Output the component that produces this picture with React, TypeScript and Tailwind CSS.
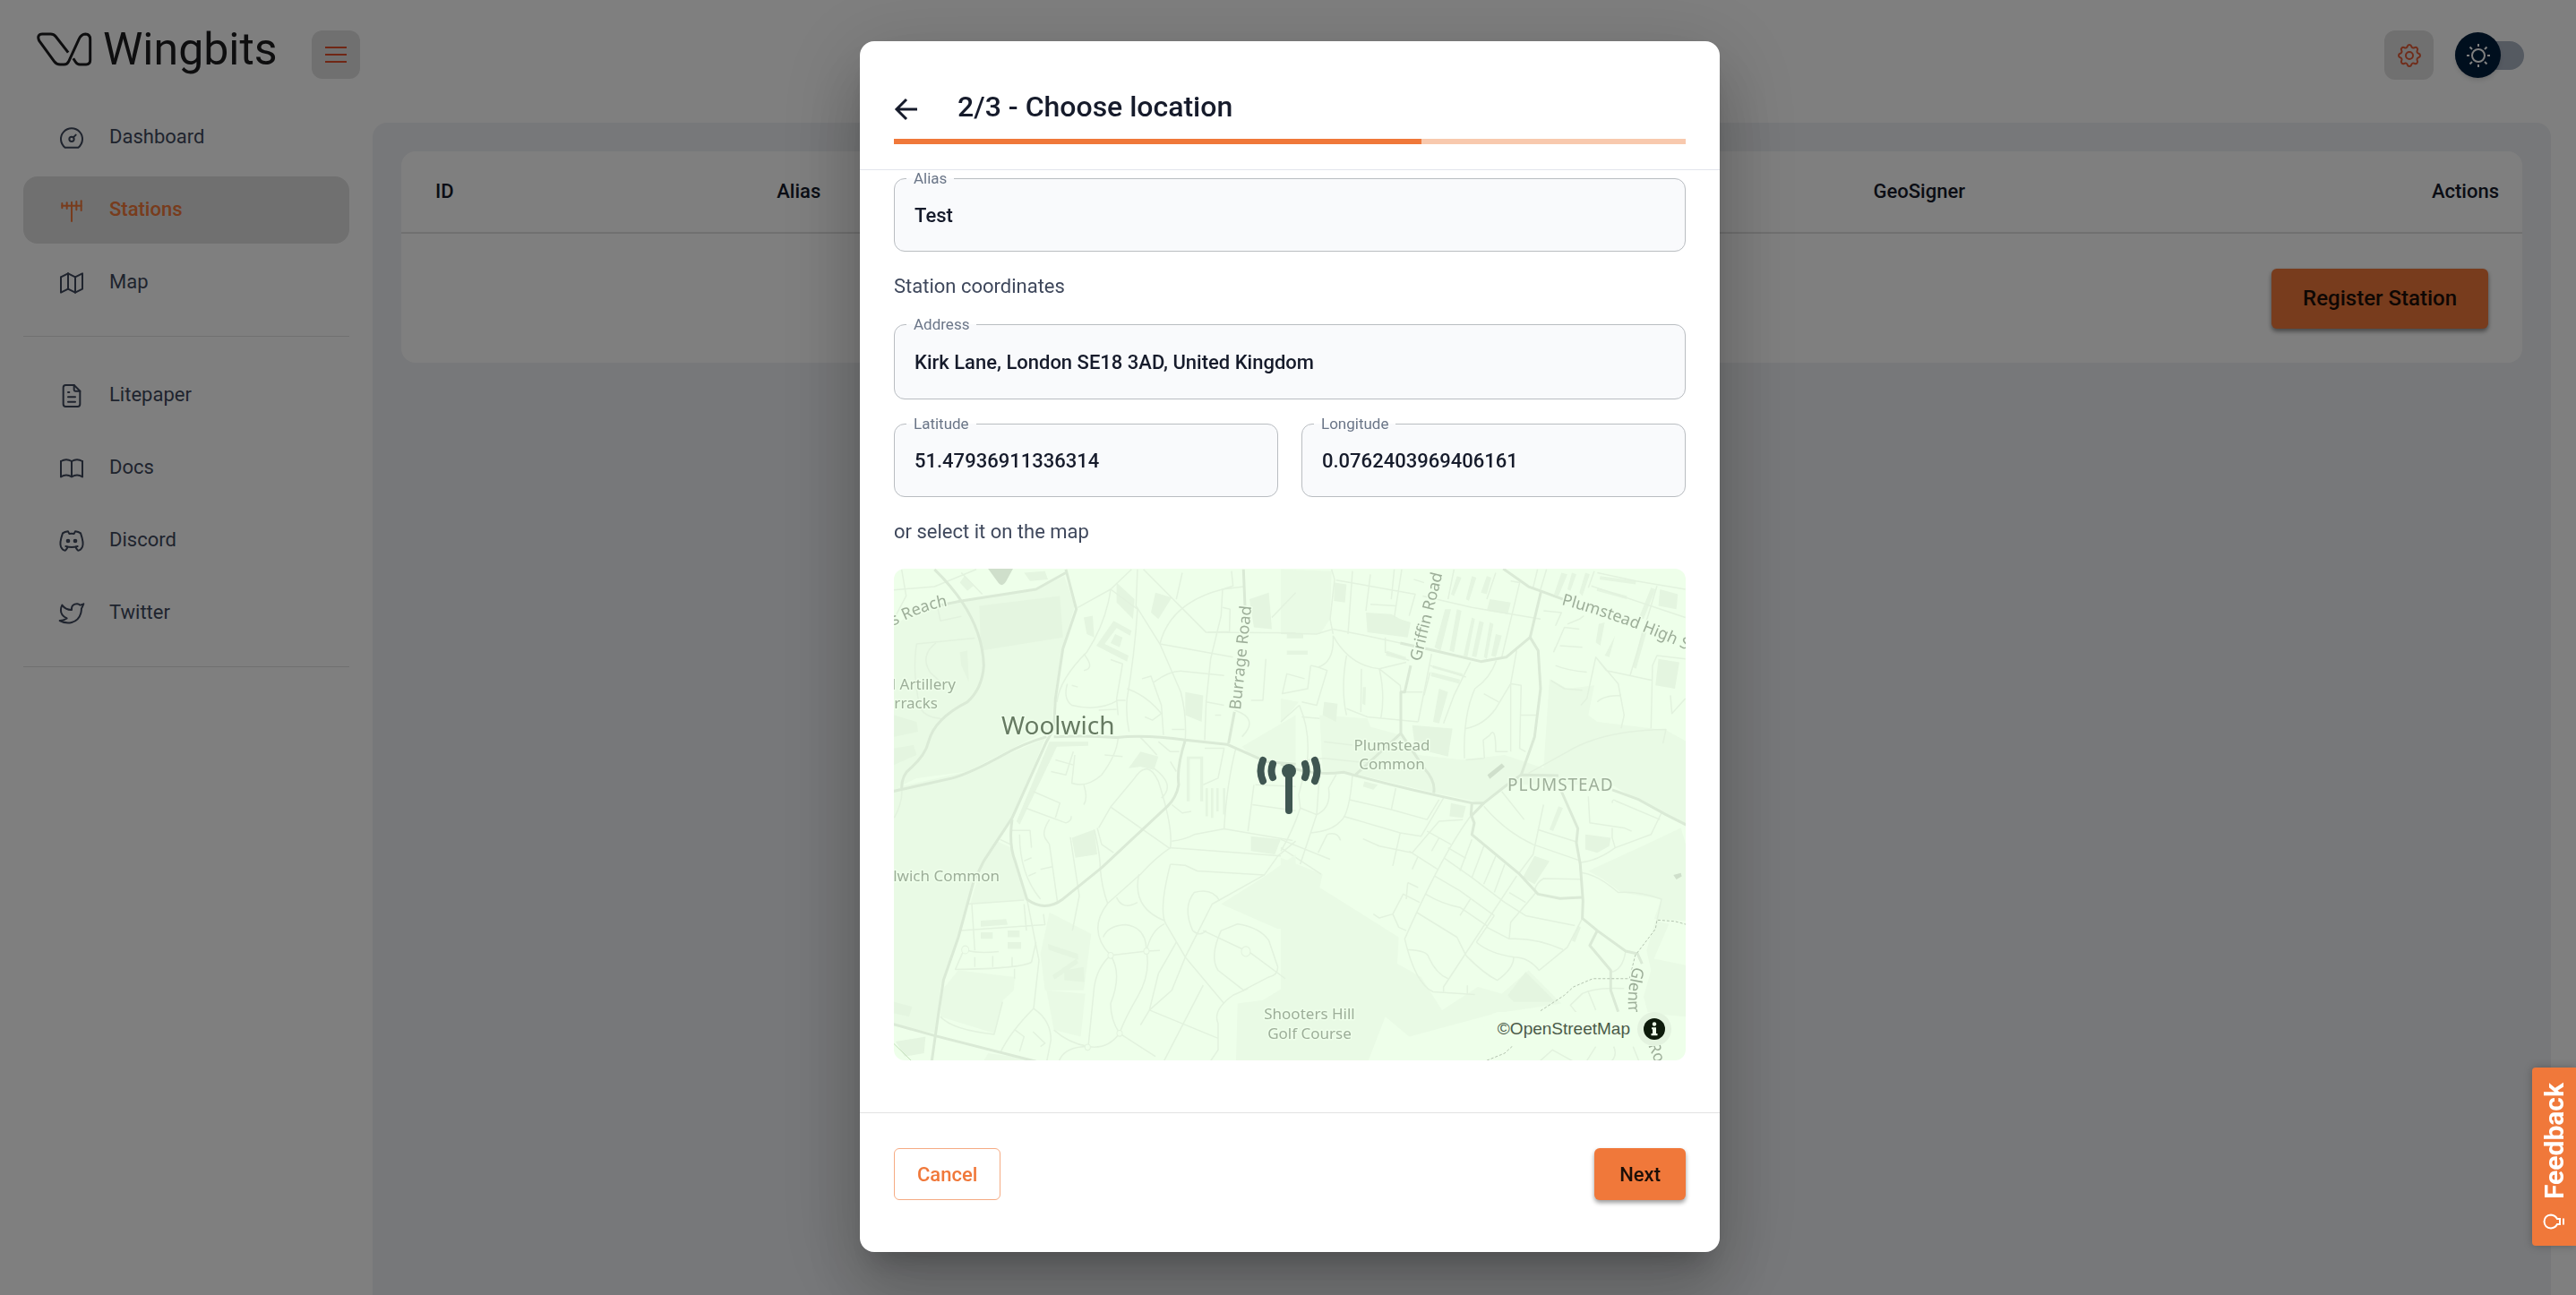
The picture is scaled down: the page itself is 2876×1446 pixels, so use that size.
import React from 'react';
import {
  TbAntenna,
  TbBook,
  TbBrandDiscord,
  TbBrandTwitter,
  TbDashboard,
  TbFileText,
  TbMap,
  TbSettings,
} from 'react-icons/tb';

type NavItem = { label: string; icon: React.ElementType; active?: boolean };

const mainNav: NavItem[] = [
  { label: 'Dashboard', icon: TbDashboard },
  { label: 'Stations', icon: TbAntenna, active: true },
  { label: 'Map', icon: TbMap },
];

const resourceNav: NavItem[] = [
  { label: 'Litepaper', icon: TbFileText },
  { label: 'Docs', icon: TbBook },
  { label: 'Discord', icon: TbBrandDiscord },
  { label: 'Twitter', icon: TbBrandTwitter },
];

function NavList({ items }: { items: NavItem[] }) {
  return (
    <ul className="flex flex-col gap-1.5">
      {items.map(({ label, icon: Icon, active }) => (
        <li key={label}>
          <a
            href="#"
            className={
              active
                ? 'flex h-[75px] items-center gap-[26px] rounded-2xl bg-[#e0e0e0] pl-[38px] text-[22px] font-medium text-[#f0783a]'
                : 'flex h-[75px] items-center gap-[26px] rounded-2xl pl-[38px] text-[22px] text-[#3f485c]'
            }
          >
            <Icon className="size-8 shrink-0 [stroke-width:1.5]" />
            <span className="pb-0.5">{label}</span>
          </a>
        </li>
      ))}
    </ul>
  );
}

function Logo() {
  return (
    <a href="#" className="flex items-center gap-3 text-[#1c1c1e]">
      <svg viewBox="60 42 190 120" className="h-10 w-[63px]" fill="none" stroke="currentColor" strokeWidth="9" strokeLinejoin="round">
        <path d="M169 113 L127 59 Q120 51 110 51 H82 Q62 52 71 73 L122 143 Q129 153 142 153 H155 Q166 153 171 142 L206 66 Q213 52 227 51 Q243 52 243 68 V139 Q243 153 229 153 H208 Q199 153 194 145 L186 133" />
      </svg>
      <span className="text-[50px] leading-[60px]">Wingbits</span>
    </a>
  );
}

function Header() {
  return (
    <header className="flex h-[137px] items-start justify-between pr-[58px] pl-10">
      <div className="flex">
        <div className="pt-[25px]">
          <Logo />
        </div>
        <button aria-label="Toggle menu" className="mt-[34px] ml-[38px] flex size-[54px] items-center justify-center rounded-xl bg-[#e0e0e0] text-[#e04e2a]">
          <svg viewBox="0 0 24 18" className="h-[18px] w-6" stroke="currentColor" strokeWidth="2">
            <path d="M0 1H24M0 9H24M0 17H24" />
          </svg>
        </button>
      </div>
      <div className="flex items-center gap-6 pt-[34px]">
        <button aria-label="Settings" className="flex size-[55px] items-center justify-center rounded-xl bg-[#e0e0e0] text-[#e05a36]">
          <TbSettings className="size-8 [stroke-width:1.5]" />
        </button>
        <button role="switch" aria-checked="false" aria-label="Dark mode" className="flex h-8 w-[77px] items-center rounded-full bg-[#aab4c3]">
          <span className="flex size-[51px] shrink-0 items-center justify-center rounded-full bg-[#001e3c] shadow-md">
            <svg viewBox="0 0 28 28" className="size-7" fill="none" stroke="#ffffff" strokeWidth="2">
              <circle cx="14" cy="14" r="7" />
              <path d="M14 1V4M14 24V27M1 14H4M24 14H27M4.5 4.5L7 7M21 21L23.500 23.500M4.500 23.500L7 21M21 7L23.500 4.500" />
            </svg>
          </span>
        </button>
      </div>
    </header>
  );
}

function StationsTable() {
  return (
    <div className="overflow-hidden rounded-2xl bg-white">
      <table className="w-full table-fixed text-left text-[22px] text-[#161b2b]">
        <thead>
          <tr className="h-[91px] border-b-2 border-[#e0e0e0]">
            <th className="w-[16.1%] pb-0.5 pl-[38px] font-medium">ID</th>
            <th className="w-[51.7%] pb-0.5 pl-[38px] font-medium">Alias</th>
            <th className="pb-0.5 pl-[38px] font-medium">GeoSigner</th>
            <th className="pr-[26px] pb-0.5 text-right font-medium">Actions</th>
          </tr>
        </thead>
        <tbody>
          <tr className="h-[145px]">
            <td colSpan={4} className="pr-[38px] text-right">
              <button className="h-[67px] rounded-md bg-[#f0783a] px-[35px] text-2xl font-medium text-[#1c0f08] shadow-[0_3px_5px_rgba(0,0,0,0.45)]">
                Register Station
              </button>
            </td>
          </tr>
        </tbody>
      </table>
    </div>
  );
}

function Field({ id, label, value, tall }: { id: string; label: string; value: string; tall?: boolean }) {
  return (
    <fieldset className="w-full min-w-0 rounded-xl border border-[#b9bdc1] bg-[#f9fafc] pb-2">
      <legend className="ml-[13px] px-2 text-[17px] leading-[18px] text-[#6b7688]">
        <label htmlFor={id}>{label}</label>
      </legend>
      <input
        id={id}
        defaultValue={value}
        className={
          tall
            ? 'h-[66px] w-full bg-transparent px-[22px] text-[22px] font-medium text-[#161b2b] outline-none'
            : 'h-16 w-full bg-transparent px-[22px] text-[22px] font-medium text-[#161b2b] outline-none'
        }
      />
    </fieldset>
  );
}

const westParks = [
  'M0 240 L120 170 L330 130 L520 105 L625 60 L660 150 L625 260 L595 400 L580 520 L300 650 L130 670 L60 700 L0 700Z',
  'M0 710 L300 650 L560 550 L520 640 L450 790 L350 920 L300 1050 L270 1150 L210 1300 L195 1440 L0 1410Z',
  'M400 860 L445 880 L500 1036 L310 1050 L345 940Z',
  'M270 1250 L460 1270 L455 1310 L420 1340 L390 1440 L210 1390 L215 1310Z',
  'M575 1075 L715 1140 L690 1310 L560 1310 L545 1200Z',
  'M565 1310 L695 1320 L680 1450 L590 1430Z',
  'M1150 1050 L1290 970 L1400 900 L1400 1120 L1340 1125Z',
  'M1400 1280 L1290 1340 L1205 1350 L1200 1530 L1400 1530Z',
  'M1220 575 L1400 480 L1400 620 L1260 610Z',
  'M370 1500 L530 1520 L350 1530Z',
];

const westBlocks = [
  'M340 150 L610 120 L620 245 L345 285Z',
  'M275 290 L300 285 L305 380 L280 330Z',
  'M650 850 L725 825 L735 900 L662 910Z',
  'M840 640 L880 590 L940 605 L925 645 L880 635Z',
  'M1245 130 L1310 110 L1320 220 L1260 215Z',
  'M1030 410 L1090 420 L1085 500 L1030 480Z',
  'M1250 845 L1350 855 L1330 900 L1250 890Z',
  'M1035 605 H1045 V740 H1035Z M1080 605 H1090 V740 H1080Z M1045 605 H1080 V612 H1045Z',
  'M1098 700 H1106 V785 H1098Z M1116 700 H1124 V790 H1116Z M1134 700 H1142 V770 H1134Z M1156 700 H1164 V780 H1156Z',
  'M55 580 L120 570 L130 600 L55 630Z',
  'M55 480 L130 500 L135 530 L55 545Z',
  'M55 1345 L115 1360 L105 1390 L55 1380Z',
  'M575 560 L705 560 L705 572 L600 575 L475 810 L465 800Z',
  'M345 1100 L430 1095 L435 1112 L345 1118Z',
  'M345 1135 H385 V1155 H345Z M435 1130 H475 V1150 H435Z M435 1165 H480 V1185 H435Z',
  'M570 1170 L670 1200 L672 1218 L572 1188Z M585 1265 L665 1215 L672 1228 L592 1278Z M625 1250 L690 1240 L692 1285 L625 1280Z',
  'M790 195 L850 225 L845 240 L800 217 L760 265 L840 300 L835 318 L732 270Z M795 235 L820 245 L810 275 L780 262Z',
  'M690 185 L720 180 L725 245 L700 235Z',
  'M930 110 L985 125 L940 190 L915 170Z',
  'M800 80 L860 130 L855 190 L800 140Z',
  'M60 1465 L160 1450 L155 1500 L90 1510Z',
  'M290 60 L320 90 L300 105 L275 80Z',
  'M490 50 L560 45 L570 70 L510 75Z',
];

const westMajor = [
  'M630 40 L665 160 L620 280 L595 430 L590 520 L565 560 L490 710 L450 790 L355 920 L320 985 L270 1150 L220 1280 L205 1370 L180 1530',
  'M565 545 Q490 565 420 600 Q310 655 250 670 Q150 690 50 710',
  'M590 545 Q700 540 800 547 Q900 538 1030 555 L1170 568 L1300 620 L1400 628',
  'M50 1412 L190 1447 L530 1525',
  'M1030 555 Q1000 640 1008 690 Q1000 730 970 755 L750 940 L620 1035 Q560 1075 500 1036 L460 920 Q438 870 450 795',
  'M630 50 L530 100 L280 135 L200 150',
  'M190 40 Q350 180 355 330 Q350 400 300 440 Q190 490 170 560 Q160 600 110 640 Q80 660 80 700',
  'M1225 40 L1230 150 M1195 470 L1175 565',
];

const westMinor = [
  'M50 102 L190 92 L330 40',
  'M80 40 L95 120 L60 180',
  'M280 50 L350 115 M200 155 L210 195 L280 182',
  'M325 247 L130 265 Q115 350 140 450 Q150 485 210 490 M195 262 Q140 300 175 350 L210 380',
  'M80 700 Q85 740 55 790',
  'M670 155 L780 100 L850 40 M780 100 Q765 200 700 290 Q610 370 600 440',
  'M780 100 L870 160 Q860 300 835 430 Q830 480 842 530',
  'M870 40 L865 150 L945 265 L1015 410 Q1035 480 1030 555',
  'M945 265 Q980 140 1155 100 L1225 92 M945 265 L1190 305',
  'M1020 50 L1000 130 M890 40 L1100 230 L1400 232',
  'M1185 45 L1190 90 L1155 100 L1150 180 L1115 310 L1100 440 L1095 555',
  'M1155 155 L1180 160 L1178 228 L1105 230 M1100 440 L1160 450 M1130 480 H1150',
  'M1300 310 L1290 435 L1250 435 M1400 110 L1320 185 M1195 465 Q1280 490 1220 545',
  'M925 380 Q980 345 1020 347 L1160 360 M835 400 Q900 420 950 475 L920 495 L895 485',
  'M885 370 L915 362 L950 450 L957 540 M985 523 H1028',
  'M635 385 Q620 430 650 450 Q740 470 805 435 L830 435 M780 312 L820 325 L800 430 L805 480',
  'M690 295 Q730 340 690 345 M740 465 L800 462 M650 390 L670 395',
  'M805 550 Q800 600 750 660 Q700 700 650 685 L660 600 M580 650 L630 660 L655 590 M760 600 L820 605',
  'M655 630 L595 615 M690 690 Q705 730 690 750 M520 710 L610 745 L595 790 M495 760 L630 805 Q650 800 648 785',
  'M575 795 Q550 830 560 850 L575 870 L602 1045 M450 828 H510 L515 880 M475 840 Q475 960 545 1035 M490 920 L515 910 M505 965 L530 955 M545 945 L585 937',
  'M780 757 L975 880 L1060 885 L1350 905 M740 820 L780 757 L860 670 Q905 610 940 680 Q990 820 980 880',
  'M725 825 Q745 900 745 940 Q750 1000 770 1048 M645 848 L675 1025 L652 1130 M735 820 L750 870 L790 895',
  'M940 560 L980 590 H1010 M880 547 L905 570 L935 600',
  'M985 860 Q1030 855 1060 840 L1160 823 L1390 858 M980 930 L1030 933 L1070 950 L1295 962',
  'M1200 578 Q1170 680 1160 823 M1260 690 L1240 830 M1265 690 L1400 695 M1255 750 L1400 768 M1095 580 L1160 580 L1140 670 L1090 690',
  'M985 750 L1020 775 L1050 770 M980 880 Q930 910 880 960 L770 1048 Q700 1130 780 1205 L900 1192 Q900 1120 830 1112 Q770 1115 755 1150',
  'M980 930 Q940 1070 965 1110 L1030 1210 L1160 1350 M875 960 Q850 1060 960 1100 M800 1030 Q820 1070 870 1045',
  'M960 1110 Q915 1130 900 1192 L945 1190 M900 1192 Q915 1260 870 1330 Q825 1400 810 1440 Q780 1400 780 1350 Q820 1260 780 1205',
  'M780 1205 Q735 1240 725 1300 L705 1480 Q770 1490 810 1440 L930 1510 M705 1480 Q620 1480 605 1530 M705 1480 Q640 1470 590 1430',
  'M1000 1165 L940 1260 L910 1370 L1140 1455 M1030 1210 L985 1310 L910 1370 L880 1415',
  'M1145 1040 Q1120 1000 1060 1015 Q1020 1060 1055 1130 Q1080 1150 1100 1130',
  'M1400 860 L1340 905 L1295 962 L1120 1050 L1030 1210 M1090 1130 L1220 1185 M1245 1195 L1365 1275',
  'M1205 1110 Q1280 1120 1310 1160 L1340 1240 Q1340 1265 1310 1270 L1225 1310 L1140 1250 Q1110 1210 1150 1130Z',
  'M1090 1295 L955 1530 M1240 1305 L1190 1325 Q1120 1370 1140 1410 L1140 1490 L1110 1530',
  'M500 1036 L540 1220 L522 1365 Q580 1400 580 1460 L565 1530 M522 1365 Q440 1440 410 1500',
  'M300 1050 L490 1038 M278 1130 L560 1112 L555 1080 M315 1050 L325 1190 M490 1050 L498 1130',
  'M530 1165 L515 1225 Q480 1245 260 1247 L285 1195 M300 1190 Q340 1200 405 1193 M325 1210 V1240 M385 1207 V1240 M450 1210 V1240 M458 1245 V1275',
  'M210 1390 Q250 1430 390 1443 L418 1345 M410 855 L445 870',
  'M460 1430 L490 1450 L475 1495 M520 1435 L560 1470 L545 1480 M980 620 L1000 650 M925 640 Q1000 690 950 730',
];

const eastParks = [
  'M0 40 L170 45 L165 190 L130 235 L0 235Z',
  'M0 430 L60 440 L0 505Z',
  'M130 480 L290 490 L300 515 L400 540 L460 600 L610 615 L750 600 L880 640 L900 370 L960 400 L1050 390 L1030 480 L1060 500 L1290 525 L1360 560 L1360 810 L1200 740 L1110 690 L760 690 L680 745 L520 715 L400 690 L240 655 L140 650Z',
  'M0 910 L140 960 L130 1000 L395 1150 L390 1230 L470 1270 L540 1370 L660 1300 L740 1320 L830 1250 L940 1350 L720 1380 L430 1450 L350 1390 L290 1530 L0 1530Z',
  'M1030 950 L1200 880 L1340 820 L1360 880 L1360 1100 L1250 1095 L1275 1035 L1140 1015 L1080 975Z',
  'M1255 1100 L1300 1110 L1250 1215 L1360 1235 L1360 1390 L1230 1380 L1215 1330 L1240 1250 L1225 1190Z',
];

const eastBlocks = [
  'M285 170 L370 175 L400 190 L435 200 L425 245 L290 230Z',
  'M440 510 L575 520 L560 605 L450 580Z',
  'M180 80 L220 85 L215 140 L178 135Z',
  'M1265 310 L1335 320 L1320 400 L1255 390Z',
  'M1020 840 L1105 850 L1100 875 L1060 895 L1020 885Z',
  'M850 905 L900 920 L850 990 L810 970Z',
  'M570 745 L620 755 L610 790 L565 785Z',
  'M145 440 L190 445 L185 500 L140 480Z',
  'M700 130 L770 140 L760 175 L690 165Z',
  'M820 1255 L920 1345 L780 1345 L760 1325Z',
  'M550 160 L570 160 L535 285 L515 275Z M590 160 L605 165 L580 290 L565 285Z M640 185 L650 190 L625 305 L612 300Z M665 195 L680 200 L655 305 L640 302Z M700 200 L712 205 L690 310 L680 305Z M720 235 L740 240 L720 305 L705 300Z',
  'M510 330 L610 355 L608 362 L508 338Z M505 350 L600 372 L598 385 L503 362Z M530 400 L560 410 L530 505 L510 500Z',
  'M590 60 L605 65 L580 120 L570 115Z M640 60 L655 65 L630 135 L620 130Z M690 60 L705 65 L690 115 L670 110Z',
  'M940 50 L960 55 L930 120 L915 115Z M975 50 L990 55 L970 105 L960 100Z M1020 50 L1035 55 L1010 120 L1000 110Z',
  'M1070 60 L1190 75 L1188 85 L1068 70Z M1060 95 L1160 120 L1158 130 L1058 105Z M1240 95 L1255 100 L1215 190 L1200 185Z M1270 100 L1330 115 L1325 160 L1265 150Z',
  'M1085 200 L1070 270 L1055 260 L1065 205Z M1225 230 L1190 340 L1180 335 L1210 225Z M1120 240 L1100 305 L1085 300Z',
  'M945 760 L912 830 L900 825 L930 755Z',
  'M275 395 L285 395 L283 450 L273 445Z M355 285 L420 305 L415 315 L352 300Z',
  'M280 680 L325 690 L310 705 L275 695Z',
  'M1005 1120 L985 1165 L975 1160 L995 1115Z',
  'M20 232 H75 V248 H20Z M20 285 H90 V297 H20Z',
];

const eastMajor = [
  'M745 38 L830 92 L870 105 L945 130',
  'M872 105 L835 245 L862 285 L870 400 L850 545 L805 660',
  'M835 245 L755 305 L670 318 L515 285 L400 262',
  'M435 330 L415 410 H402 V535 L250 660 M402 535 L480 640 Q520 680 512 715',
  'M0 628 Q100 665 210 652 Q400 700 640 745 L680 745 L755 692 L805 660 L930 662',
  'M640 745 L637 780 L648 805 L640 840 L800 960 L862 1020 L935 1033 L1008 1030',
  'M680 745 L637 785',
  'M935 700 L995 822 L990 865 L1003 930 L1012 1040 L1010 1093 L1060 1130 L1155 1192 L1195 1200 L1210 1230',
  'M1110 705 L1200 735 L1290 780 L1360 812',
  'M1060 1130 L1035 1175 L1105 1250 V1310 L1130 1375',
];

const eastMinor = [
  'M0 233 L120 235 L175 220 L285 240 L400 262 M170 40 L180 70 L165 190 L175 235',
  'M240 45 L225 235 M300 55 L285 165 M380 40 L370 130 M185 72 L450 115 L430 180 M405 40 L380 185',
  'M175 240 Q230 330 330 340 L420 320 M175 240 Q180 320 125 335 L100 330 M125 335 L155 345 L120 450 L70 440',
  'M220 300 Q200 400 220 480 M270 340 L268 470 M330 340 Q350 420 335 490 M220 460 L290 485 L460 500 M330 340 L400 390 L402 410 L475 410',
  'M505 295 L460 500 M635 320 L580 420 L545 505 M722 315 Q700 370 650 400 Q610 480 615 610 M790 285 L770 385 L720 460 Q680 510 620 520',
  'M770 385 L805 390 L800 580 L820 590 M770 385 V590 M805 480 H855 M680 415 L730 440 M700 540 Q720 510 720 590 H760 M700 540 L678 555 L682 610 M620 615 L680 610',
  'M475 120 L640 155 L870 190 M580 40 L560 130 M720 50 L690 130 M770 75 L800 80 L740 305 M860 40 L845 95 M890 40 L870 100',
  'M100 330 L90 400 L5 415 L20 355 L80 370 M62 450 Q100 530 88 620 L60 720 L65 760 Q40 830 0 890 M0 500 L62 450',
  'M88 615 L145 610 L300 625 M70 485 L130 490 M145 560 L240 570',
  'M0 855 L165 915 M0 880 L135 960 M65 760 L120 780 Q170 760 160 700 L185 660 M130 655 L120 780 L65 930 M240 660 Q230 780 200 800 Q170 830 100 835 M155 840 Q190 830 200 858 M155 840 L125 895',
  'M230 735 L370 765 L490 795 L530 735 M385 700 L370 765 M210 785 L400 835 L470 845 L545 730 M400 835 L375 935 M275 853 L330 875 L440 895 M440 895 L530 800 L610 795 M430 890 L525 945 M490 830 L570 870 M530 850 L505 890 M460 905 L440 945',
  'M635 785 Q540 900 415 1155 Q450 1290 510 1315 L650 1323 M545 910 L640 970 L750 1045 L820 1085 L985 1115 M515 965 L600 1010 L715 1085 M485 1020 Q540 1050 600 1060 L690 1115 M455 1075 L590 1150 L620 1205',
  'M560 880 L620 912 M640 855 L600 950 M680 875 L640 970 M720 905 L680 990 M750 930 L715 1015 M790 965 L545 1300 V1315 M635 1035 L600 1085 M765 1015 L820 1045 M715 1085 L655 1165 M655 1165 Q700 1200 780 1210 Q830 1210 865 1250 L960 1180 L1010 1093',
  'M690 1120 L765 1155 Q850 1150 945 1187 M855 1015 L770 1105 L765 1155 M780 1210 Q780 1245 725 1280 Q680 1260 620 1205 M425 1188 Q490 1190 495 1210 Q520 1260 560 1275 M625 1295 V1320',
  'M680 755 Q750 830 845 870 L1005 920 M860 825 L990 862 M880 750 L845 900 L795 960 M740 710 L815 795 M1005 975 L880 973 Q855 985 850 1010 M1000 925 Q1060 920 1120 880 L1240 840 L1275 775',
  'M1030 725 L1035 805 L1150 820 L1175 830 M1110 820 V850 L1120 880 M1110 745 Q1110 730 1125 740 L1270 795',
  'M1005 955 Q1060 960 1130 1015 Q1200 1010 1275 1035 L1260 1100 M1155 1192 Q1145 1250 1105 1255 M1150 1305 Q1060 1300 1010 1320 L970 1355 L1010 1400 M1030 1315 L1055 1370',
  'M830 655 Q900 620 960 590 Q1080 525 1290 523 L1280 565 M1240 520 L1245 330 L1260 300 L1355 310 M1245 375 L1090 345 L1055 305 L1025 430 L1005 450 M1055 305 L1130 385 L1150 480 L1140 520 M1060 440 Q1080 420 1140 420',
  'M905 375 L950 400 L1010 405 M920 330 Q960 345 1025 350 M960 205 L1000 190 L1015 180 M920 275 Q900 320 950 215 L1000 220 M935 270 L1010 275 M880 165 L940 170 L920 210',
  'M1050 45 L1030 95 M1040 90 L1355 185 M1060 50 L1190 75 L1355 100 M1260 90 L1170 360 M1305 420 L1310 475 L1355 430',
  'M300 145 L385 150 M445 70 L480 80 M350 245 L350 290 L430 315 M480 420 L500 350 M500 330 L620 365',
  'M310 1080 L330 1092 L375 1080 L410 1020 L465 1045 M375 1080 L395 1120 L420 1130 M425 985 L460 1000 M425 985 L420 1035',
  'M860 1530 L910 1490 L990 1530 M1055 1480 L1020 1530 M1115 1480 Q1130 1510 1100 1530 M1180 1480 L1200 1525',
];

function Paths({ list, className }: { list: string[]; className: string }) {
  return (
    <>
      {list.map((d) => (
        <path key={d} d={d} className={className} vectorEffect="non-scaling-stroke" />
      ))}
    </>
  );
}

function MapDrawing() {
  const park = 'fill-[#e9fae5]';
  const block = 'fill-[#e4f5e0]';
  const minor = 'fill-none stroke-[#e2f2de] stroke-[1.5px]';
  const major = 'fill-none stroke-[#daead6] stroke-[3px]';
  return (
    <svg viewBox="0 0 884 549" preserveAspectRatio="xMidYMid slice" className="block size-full bg-[#eeffea]" strokeLinejoin="round" role="img" aria-label="Map of Woolwich and Plumstead">
      <defs>
        <path id="reach" d="M-100 150 Q-20 56 62 41" />
        <path id="highStreet" d="M745 40 Q845 66 960 128" />
        <path id="glenmore" d="M826 444 Q812 490 830 530" />
      </defs>
      <g transform="translate(432 -14) scale(0.3333 0.37)">
        <Paths list={eastParks} className={park} />
        <Paths list={eastBlocks} className={block} />
        <Paths list={eastMinor} className={minor} />
        <Paths list={eastMajor} className={major} />
        <path d="M692 660 L740 626 L750 635 L700 672Z M1315 962 L1340 956 L1343 966 L1325 976Z" fill="#cfdfcb" />
        <path d="M870 1372 L950 1325 L980 1300 L1045 1275 H1168 L1187 1205 L1255 1125 L1260 1098 L1320 1102 L1360 1112 M690 1522 L750 1500 L780 1475" fill="none" stroke="#b4c4b0" strokeWidth="1" strokeDasharray="3 2" vectorEffect="non-scaling-stroke" />
      </g>
      <g transform="translate(-18 -14) scale(0.3333 0.37)">
        <Paths list={westParks} className={park} />
        <Paths list={westBlocks} className={block} />
        <Paths list={westMinor} className={minor} />
        <Paths list={westMajor} className={major} />
        <path d="M368 36 H454 L430 76 Q415 98 400 76Z" fill="#cfdfcb" />
        <g fill="#eeffea" className="stroke-[#e2f2de] stroke-[3px]">
          <circle cx="780" cy="1205" r="9" />
          <circle cx="900" cy="1192" r="9" />
          <circle cx="810" cy="1440" r="9" />
          <circle cx="703" cy="1482" r="9" />
          <circle cx="293" cy="1188" r="12" />
          <circle cx="1233" cy="1193" r="15" />
        </g>
        <path d="M50 1468 L115 1525" className="stroke-[#c3dfba] stroke-[1px]" vectorEffect="non-scaling-stroke" />
      </g>
      <g className="fill-[#9dae99] stroke-[#eeffea] stroke-[3px] font-['Noto_Sans'] text-[17px] [paint-order:stroke]">
        <text x="69" y="135" textAnchor="end">Royal Artillery</text>
        <text x="49" y="156" textAnchor="end">Barracks</text>
        <text x="118" y="349" textAnchor="end">Woolwich Common</text>
        <text x="556" y="203" textAnchor="middle">Plumstead</text>
        <text x="556" y="224" textAnchor="middle">Common</text>
        <text x="464" y="503" textAnchor="middle">Shooters Hill</text>
        <text x="464" y="525" textAnchor="middle">Golf Course</text>
        <text x="685" y="248" className="text-[19px] tracking-wider">PLUMSTEAD</text>
        <g className="text-[18px]">
          <text>
            <textPath href="#reach" startOffset="99%" textAnchor="end">Gallions Reach</textPath>
          </text>
          <text transform="translate(387 158) rotate(-84)">Burrage Road</text>
          <text transform="translate(588 104) rotate(-76)">Griffin Road</text>
          <text>
            <textPath href="#highStreet">Plumstead High Street</textPath>
          </text>
          <text>
            <textPath href="#glenmore">Glenmore</textPath>
          </text>
          <text transform="translate(842 532) rotate(68)">Road</text>
        </g>
        <text x="120" y="185" className="fill-[#667a62] text-[28px]">Woolwich</text>
      </g>
      <g transform="translate(441 226)" stroke="#3f5651" fill="none" strokeLinecap="round">
        <circle r="8" fill="#3f5651" stroke="none" />
        <path d="M0 0V44" strokeWidth="8" />
        <path d="M-18 -8Q-21 0 -18 7M18 -8Q21 0 18 7" strokeWidth="8" />
        <path d="M-29 -12Q-34 0 -29 11M29 -12Q34 0 29 11" strokeWidth="8" />
      </g>
    </svg>
  );
}

function LocationMap() {
  return (
    <div className="relative mt-[26px] h-[549px] overflow-hidden rounded-xl">
      <MapDrawing />
      <div className="absolute right-4 bottom-4 flex h-[38px] items-center gap-2 rounded-full bg-[#eeffea] pl-4 font-['Liberation_Sans'] text-[19px] text-[#4a5a48]">
        <a href="#">©OpenStreetMap</a>
        <button aria-label="Toggle attribution" className="flex size-[38px] items-center justify-center rounded-full bg-[#e3f3df]">
          <svg viewBox="0 0 24 24" className="size-6">
            <circle cx="12" cy="12" r="12" fill="#0d1a0b" />
            <circle cx="12" cy="6.500" r="2.200" fill="#eeffea" />
            <path d="M9 10.200H14V17H15.500V19.200H8.500V17H10V12.200H9Z" fill="#eeffea" />
          </svg>
        </button>
      </div>
    </div>
  );
}

function LocationDialog() {
  return (
    <div className="fixed inset-0 flex items-center justify-center bg-black/50 pb-0.5 pl-1">
      <div
        role="dialog"
        aria-modal="true"
        aria-labelledby="dialog-title"
        className="w-full max-w-[960px] overflow-hidden rounded-2xl bg-white shadow-[0_22px_30px_-14px_rgba(0,0,0,0.2),0_48px_76px_6px_rgba(0,0,0,0.14),0_18px_92px_16px_rgba(0,0,0,0.12)]"
      >
        <div className="border-b border-[#e2e5ec] px-[38px] pt-[53px] pb-7">
          <div className="flex h-14 items-start gap-[44px]">
            <button aria-label="Back" className="mt-2.5 text-[#161b2b]">
              <svg viewBox="0 0 27 26" className="h-[26px] w-[27px]" fill="none" stroke="currentColor" strokeWidth="3">
                <path d="M26 13H3M14 2L3 13L14 24" />
              </svg>
            </button>
            <h2 id="dialog-title" className="text-[32px] leading-10 font-medium text-[#161b2b]">
              2/3 - Choose location
            </h2>
          </div>
          <div role="progressbar" aria-valuenow={2} aria-valuemin={0} aria-valuemax={3} className="h-1.5 bg-[#f8c9ae]">
            <div className="h-full w-2/3 bg-[#f0783a]" />
          </div>
        </div>

        <div className="px-[38px] pb-[58px] text-[22px] leading-[30px] text-[#3f485c]">
          <Field id="alias" label="Alias" value="Test" />
          <p className="mt-6">Station coordinates</p>
          <div className="mt-[18px]">
            <Field id="address" label="Address" value="Kirk Lane, London SE18 3AD, United Kingdom" tall />
          </div>
          <div className="mt-[18px] grid grid-cols-2 gap-[26px]">
            <Field id="latitude" label="Latitude" value="51.47936911336314" />
            <Field id="longitude" label="Longitude" value="0.0762403969406161" />
          </div>
          <p className="mt-6">or select it on the map</p>
          <LocationMap />
        </div>

        <div className="flex justify-between border-t border-[#e2e2e2] px-[38px] pt-[39px] pb-[58px]">
          <button className="h-[58px] rounded-md border border-[#f5ab83] px-[25px] text-[22px] font-medium text-[#f0783a]">Cancel</button>
          <button className="h-[58px] rounded-md bg-[#f0783a] px-7 text-[22px] font-medium text-[#1c0f08] shadow-[0_3px_5px_rgba(0,0,0,0.4)]">Next</button>
        </div>
      </div>
    </div>
  );
}

function FeedbackTab() {
  return (
    <button className="fixed right-0 bottom-[55px] flex h-[199px] w-[49px] items-center justify-center rounded-l bg-[#f0783a] text-white shadow-[0_0_10px_rgba(0,0,0,0.25)]">
      <span className="flex rotate-180 items-center gap-4 text-[30px] leading-[49px] font-bold [writing-mode:vertical-rl]">
        <svg viewBox="0 0 24 18" className="h-[18px] w-6" fill="none" stroke="currentColor" strokeWidth="2">
          <path d="M5 6V12H8Q10 16 15 16.500Q22 16 22.500 9Q22 2 15 1.500Q10 2 8 6H5ZM1 5.500V12.500" />
        </svg>
        Feedback
      </span>
    </button>
  );
}

export default function App() {
  return (
    <div className="flex min-h-screen flex-col bg-white font-[Roboto,sans-serif]">
      <Header />
      <div className="flex grow items-stretch">
        <nav className="-mt-[21px] w-[416px] shrink-0 px-[26px]">
          <NavList items={mainNav} />
          <hr className="mt-[22px] mb-7 border-[#e0e0e0]" />
          <NavList items={resourceNav} />
          <hr className="mt-[22px] border-[#e0e0e0]" />
        </nav>
        <main className="mr-7 grow rounded-t-2xl bg-[#eff1f4] p-8">
          <StationsTable />
        </main>
      </div>
      <LocationDialog />
      <FeedbackTab />
    </div>
  );
}
